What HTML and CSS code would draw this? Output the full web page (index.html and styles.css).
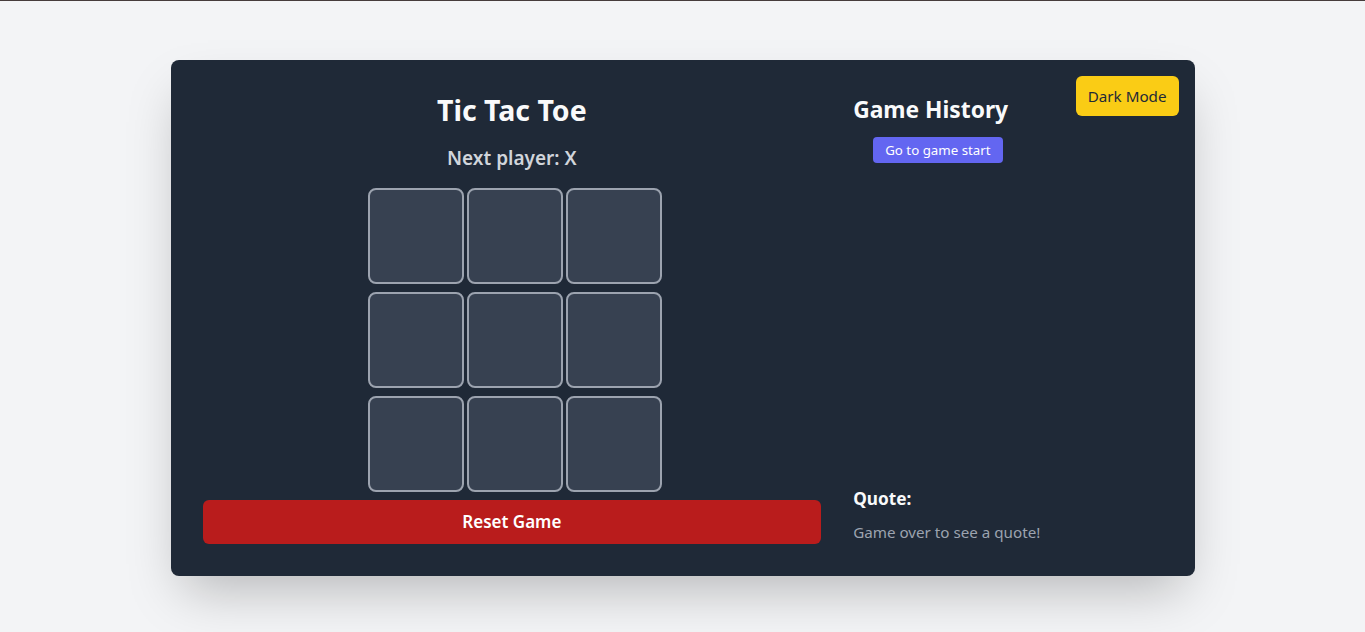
FILE: index.html
```html
<!DOCTYPE html>
<html lang="en">
<head>
<meta charset="utf-8">
<title>Tic Tac Toe</title>
<link rel="stylesheet" href="styles.css">
</head>
<body>
<div class="topline"></div>
<main class="page">
  <section class="card">
    <button class="mode-btn">Dark Mode</button>
    <div class="game">
      <h1 class="title">Tic Tac Toe</h1>
      <div class="status">Next player: X</div>
      <div class="board">
        <button class="cell"></button><button class="cell"></button><button class="cell"></button>
        <button class="cell"></button><button class="cell"></button><button class="cell"></button>
        <button class="cell"></button><button class="cell"></button><button class="cell"></button>
      </div>
      <button class="reset-btn">Reset Game</button>
    </div>
    <aside class="side">
      <div class="history">
        <h2 class="history-title">Game History</h2>
        <ol class="moves">
          <li><button class="move-btn">Go to game start</button></li>
        </ol>
      </div>
      <div class="quote">
        <h3 class="quote-title">Quote:</h3>
        <p class="quote-text">Game over to see a quote!</p>
      </div>
    </aside>
  </section>
</main>
</body>
</html>
```

FILE: styles.css
```css
* { box-sizing: border-box; }
html, body { margin: 0; padding: 0; }
body {
  background: #f3f4f6;
  font-family: "Noto Sans", "Open Sans", sans-serif;
  min-height: 632px;
}
.topline { height: 1px; background: #463c3c; }
.page {
  padding-top: 59px;
  display: flex;
  justify-content: center;
}
.card {
  position: relative;
  width: 1024px;
  background: #1f2937;
  border-radius: 8px;
  padding: 32px;
  display: grid;
  grid-template-columns: 2fr 1fr;
  column-gap: 32px;
  box-shadow: 0 25px 50px -12px rgba(0,0,0,0.25);
}
button { font-family: inherit; cursor: pointer; border: none; }
.mode-btn {
  position: absolute;
  top: 16px;
  right: 16px;
  background: #facc15;
  color: #1f2937;
  font-size: 15.2px;
  line-height: 24px;
  padding: 8px 12px;
  border-radius: 6px;
}
.game {
  display: flex;
  flex-direction: column;
  align-items: center;
}
.title {
  margin: 0 0 16px;
  font-size: 28.5px;
  line-height: 36px;
  font-weight: 700;
  color: #f9fafb;
}
.status {
  margin-bottom: 16px;
  font-size: 19px;
  line-height: 28px;
  font-weight: 600;
  color: #d1d5db;
}
.board {
  display: grid;
  grid-template-columns: repeat(3, 96px);
  gap: 8px 3px;
  margin-left: 7px;
}
.cell {
  width: 96px;
  height: 96px;
  background: #374151;
  border: 2px solid #9ca3af;
  border-radius: 8px;
}
.reset-btn {
  margin-top: 8px;
  width: 100%;
  background: #b91c1c;
  color: #fff;
  font-size: 17px;
  line-height: 28px;
  font-weight: 600;
  padding: 8px 16px;
  border-radius: 6px;
}
.side {
  display: flex;
  flex-direction: column;
  justify-content: space-between;
}
.history-title {
  margin: 2px 0 11px;
  font-size: 22.8px;
  line-height: 32px;
  font-weight: 700;
  color: #f9fafb;
}
.moves {
  margin: 0;
  padding-left: 20px;
  list-style: none;
}
.move-btn {
  background: #6366f1;
  color: #fff;
  font-size: 13.3px;
  line-height: 20px;
  padding: 3px 12px;
  border-radius: 4px;
}
.quote-title {
  margin: 0 0 7px;
  font-size: 17.2px;
  line-height: 28px;
  font-weight: 700;
  color: #f9fafb;
}
.quote-text {
  margin: 0;
  font-size: 15.2px;
  line-height: 24px;
  color: #9ca3af;
}
```
